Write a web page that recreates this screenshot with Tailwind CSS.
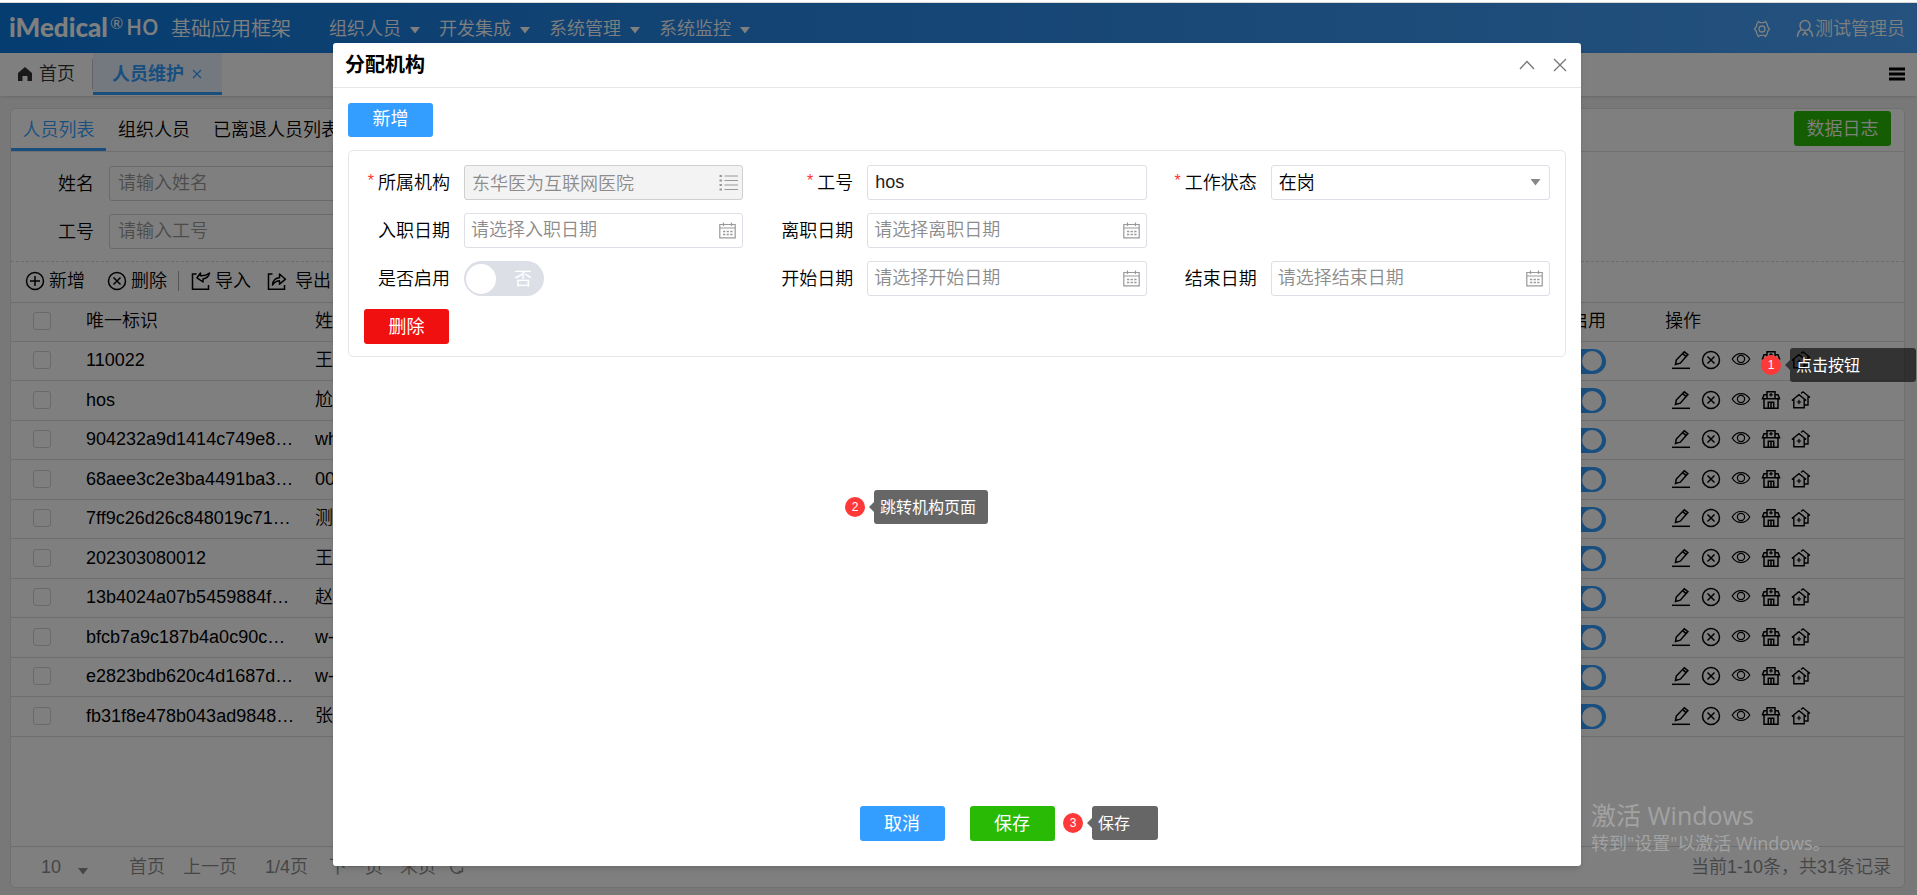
<!DOCTYPE html>
<html lang="zh-CN">
<head>
<meta charset="utf-8">
<title>人员维护</title>
<script src="https://cdn.jsdelivr.net/npm/@tailwindcss/browser@4"></script>
</head>
<body class="h-screen overflow-hidden flex flex-col bg-white text-black text-[18px] leading-6 font-[350] font-['Liberation_Sans','Noto_Sans_CJK_SC',sans-serif]">

<!-- icon sprite -->
<svg class="hidden" aria-hidden="true">
  <symbol id="i-gear" viewBox="0 0 18 18"><g fill="none" stroke="currentColor" stroke-width="1.3"><path d="M5.4 1.5 7 2.6h4l1.6-1.1 1.7 3 .3 2 1.9 2.5-1.9 2.5-.3 2-1.7 3L11 15.400H7l-1.600 1.100-1.700-3-.3-2L1.500 9l1.900-2.500.3-2z"/><circle cx="9" cy="9" r="3"/></g></symbol>
  <symbol id="i-user" viewBox="0 0 18 19"><g fill="none" stroke="currentColor" stroke-width="1.5"><circle cx="9" cy="6.500" r="5"/><path d="M5.500 10.500C3 12 1.500 14.500 1.500 18M12.500 10.500c2.500 1.500 4 4 4 7.500M6.500 16.500 9 13l2.500 3.500"/></g></symbol>
  <symbol id="i-home" viewBox="0 0 14 14"><path fill="currentColor" d="M7 0 0 6v8h4.500V9h5v5H14V6z"/></symbol>
  <symbol id="i-plus" viewBox="0 0 20 20"><g fill="none" stroke="currentColor" stroke-width="1.500"><circle cx="10" cy="10" r="8.500"/><path d="M10 5v10M5 10h10"/></g></symbol>
  <symbol id="i-xc" viewBox="0 0 20 20"><g fill="none" stroke="currentColor" stroke-width="1.500"><circle cx="10" cy="10" r="8.500"/><path d="m6.500 6.500 7 7M13.500 6.500l-7 7"/></g></symbol>
  <symbol id="i-import" viewBox="0 0 20 20"><g fill="none" stroke="currentColor" stroke-width="1.500"><path d="M5.500 3H1.500v15.200h16V14"/><path d="M18.500 2c-1 4-3 5.500-6.500 6v3L6 6.800 9.500 2v2.800C13 5 16 4 18.500 2z" stroke-linejoin="round"/></g></symbol>
  <symbol id="i-export" viewBox="0 0 20 20"><g fill="none" stroke="currentColor" stroke-width="1.500"><path d="M5.500 3H1.500v15.200h16V14"/><path d="M5.500 14c.5-5 3-7 7-7.200V3l6 5.200-6 5v-3.400c-3 0-5 1.200-7 4.200z" stroke-linejoin="round"/></g></symbol>
  <symbol id="i-edit" viewBox="0 0 20 20"><g fill="none" stroke="currentColor" stroke-width="1.500"><path d="M1 18.300h18"/><path d="m4.500 14.500.8-4.500 8-8.200 3.600 2.800-7.600 8.600z M11.600 3.600l3.600 3"/></g></symbol>
  <symbol id="i-eye" viewBox="0 0 20 20"><g fill="none" stroke="currentColor" stroke-width="1.200"><path d="M1.200 9C5.500 1.700 14.500 1.700 18.800 9 14.500 16.300 5.500 16.300 1.200 9z"/><circle cx="10" cy="9" r="3.600"/></g></symbol>
  <symbol id="i-hosp" viewBox="0 0 20 20"><g fill="none" stroke="currentColor" stroke-width="1.500"><path d="M6 8.500V1.800h8v6.700M6 4.700H3L1.500 8.800h17L17 4.700h-3M3 9v9.200h14V9M7.300 18v-5.700h5.400V18M10 12.500V18"/><path d="M10 3v3.600M8.200 4.800h3.600" stroke-width="1.300"/></g></symbol>
  <symbol id="i-house" viewBox="0 0 20 20"><g fill="none" stroke="currentColor" stroke-width="1.400"><path d="M.8 10.500 8 4.600l7.200 5.900M2.800 9.300v8.500h10.400V9.300M10 3.500l2-1.700L19 7.500M17 6.500V15h-3.500"/><path d="M8 9.800v4.400M5.800 12h4.400" stroke-width="1.200"/></g></symbol>
  <symbol id="i-cal" viewBox="0 0 17 17"><g fill="none" stroke="currentColor"><path d="M.8 2.500h15.400v13.300H.8zM.8 6h15.400M4.500.5v3.500M12.500.5v3.500" stroke-width="1.200"/><path d="M4 9.500h9.500M4 12.500h9.500" stroke-width="1.300" stroke-dasharray="2.300 1.300"/></g></symbol>
  <symbol id="i-list" viewBox="0 0 19 17"><path d="M5.500 2H19M5.500 6.500H19M5.500 11H19M5.500 15.500H19" stroke="currentColor" stroke-width="1.200"/><path d="M.5 2H3M.5 6.500H3M.5 11H3M.5 15.500H3" stroke="currentColor" stroke-width="2"/></symbol>
  <symbol id="i-down" viewBox="0 0 10 7"><path fill="currentColor" d="M0 0h10L5 6.500z"/></symbol>
  <symbol id="i-menu" viewBox="0 0 16 14"><path stroke="currentColor" stroke-width="3" d="M0 2h16M0 7h16M0 12h16"/></symbol>
  <symbol id="i-refresh" viewBox="0 0 16 16"><path fill="none" stroke="currentColor" stroke-width="1.400" d="M13 4A6.300 6.300 0 1 0 13 12M9.500 12.500h4v-4"/></symbol>
</svg>

<div class="h-[3px] shrink-0 border-b border-[#d8d8d8]"></div>

<div class="relative flex-1 min-h-0 flex flex-col bg-[#f1f1f1]">

  <!-- top bar -->
  <header class="h-[50px] shrink-0 flex items-center pl-[9px] pr-[12px] pt-[1px] text-white bg-gradient-to-r from-[#0a7ae0] via-[#2c8cea] to-[#4aa4fc]">
    <a href="#" class="w-[162px] flex items-center pb-1">
      <span class="font-['Lato'] font-black text-[26px] leading-7">iMedical</span><sup class="font-['Lato'] font-normal text-[16px] leading-4 ml-[2px] -top-1">®</sup><span class="font-['Open_Sans'] font-semibold text-[21px] leading-7 ml-[3px]">HO</span>
    </a>
    <span class="text-[20px] w-[158px]">基础应用框架</span>
    <nav class="flex gap-[19px]">
      <a href="#" class="flex items-center gap-[9px]">组织人员<svg class="w-[10px] h-[7px] mt-1"><use href="#i-down"/></svg></a>
      <a href="#" class="flex items-center gap-[9px]">开发集成<svg class="w-[10px] h-[7px] mt-1"><use href="#i-down"/></svg></a>
      <a href="#" class="flex items-center gap-[9px]">系统管理<svg class="w-[10px] h-[7px] mt-1"><use href="#i-down"/></svg></a>
      <a href="#" class="flex items-center gap-[9px]">系统监控<svg class="w-[10px] h-[7px] mt-1"><use href="#i-down"/></svg></a>
    </nav>
    <button class="ml-auto mr-[25px]" aria-label="设置"><svg class="w-[18px] h-[18px]"><use href="#i-gear"/></svg></button>
    <a href="#" class="flex items-center gap-[1px]"><svg class="w-[18px] h-[19px]"><use href="#i-user"/></svg>测试管理员</a>
  </header>

  <!-- page tabs -->
  <div class="h-[43px] shrink-0 flex items-stretch bg-white shadow pr-[12px] pb-px">
    <a href="#" class="flex items-center gap-[7px] pl-[18px] w-[92px] text-[#333]"><svg class="w-[14px] h-[14px]"><use href="#i-home"/></svg>首页</a>
    <div class="w-px my-[6px] bg-[#c8c8c8]"></div>
    <div class="w-[129px] flex items-center bg-[#e6f3ff] border-b-[3px] border-[#339eff] pt-[2px] pl-[19px] text-[#339eff]">
      <a href="#" class="font-bold">人员维护</a>
      <button class="ml-2" aria-label="关闭标签"><svg class="w-[10px] h-[10px]" viewBox="0 0 10 10"><path stroke="currentColor" stroke-width="1.200" d="m1 1 8 8M9 1 1 9"/></svg></button>
    </div>
    <button class="ml-auto" aria-label="菜单"><svg class="w-4 h-[14px]"><use href="#i-menu"/></svg></button>
  </div>

  <!-- main card -->
  <main class="flex-1 min-h-0 mt-3 mx-3 mb-[7px] ml-[10px] flex flex-col bg-white border border-[#e0e0e0] rounded-[5px]">
    <div class="h-[43px] shrink-0 flex items-stretch border-b border-[#e0e0e0] pr-[13px]">
      <a href="#" class="w-[95px] flex items-center justify-center border-b-[3px] border-[#339eff] text-[#339eff] pt-[2px]">人员列表</a>
      <a href="#" class="flex items-center ml-[12px]">组织人员</a>
      <a href="#" class="flex items-center ml-[23px]">已离退人员列表</a>
      <button class="ml-auto mt-[2px] h-[35px] w-[97px] rounded-[3px] bg-[#28ba05] text-white">数据日志</button>
    </div>
    <form class="shrink-0 flex flex-col gap-[13px] pt-[14px] pb-[12px] border-b border-dashed border-[#d8d8d8]">
      <div class="flex items-center gap-[15px]"><label for="q1" class="w-[83px] text-right">姓名</label><input id="q1" placeholder="请输入姓名" class="w-[280px] h-[35px] border border-[#d4d4d4] rounded-[3px] px-2 placeholder:text-[#999]"></div>
      <div class="flex items-center gap-[15px]"><label for="q2" class="w-[83px] text-right">工号</label><input id="q2" placeholder="请输入工号" class="w-[280px] h-[35px] border border-[#d4d4d4] rounded-[3px] px-2 placeholder:text-[#999]"></div>
    </form>
    <div class="h-[40px] shrink-0 flex items-center pl-[14px] pb-[3px]">
      <button class="flex items-center gap-1"><svg class="w-5 h-5"><use href="#i-plus"/></svg>新增</button>
      <button class="flex items-center gap-1 ml-[22px]"><svg class="w-5 h-5"><use href="#i-xc"/></svg>删除</button>
      <span class="w-px h-5 bg-[#aaa] ml-[11px]"></span>
      <button class="flex items-center gap-1 ml-[12px]"><svg class="w-5 h-5"><use href="#i-import"/></svg>导入</button>
      <button class="flex items-center gap-2 ml-[16px]"><svg class="w-5 h-5"><use href="#i-export"/></svg>导出</button>
    </div>
    <div class="flex-1 min-h-0">
      <table class="w-full table-fixed border-collapse">
        <thead>
          <tr class="h-[39px] border-y border-[#dcdcdc] bg-[#fcfcfc] text-left">
            <th class="w-[63px] pl-[22px] pb-[2px]"><input type="checkbox" aria-label="全选" class="block appearance-none size-[18px] border border-[#d4d4d8] rounded-[3px] bg-white"></th>
            <th class="w-[230px] pl-3 pb-[2px] font-[350]">唯一标识</th>
            <th class="pl-[11px] pb-[2px] font-[350]">姓名</th>
            <th class="w-[130px] pl-[12px] pb-[2px] font-[350]">是否启用</th>
            <th class="w-[252px] pl-[13px] pb-[2px] font-[350]">操作</th>
          </tr>
        </thead>
        <tbody id="rows"></tbody>
      </table>
    </div>
    <footer class="h-[41px] shrink-0 flex items-center border-t border-[#dcdcdc] pl-[30px] pr-[13px] text-[#8c8c8c]">
      <label class="relative flex items-center mr-[41px]"><select aria-label="每页条数" class="appearance-none w-[47px]"><option>10</option></select><svg class="absolute right-0 top-[13px] w-[10px] h-[7px] pointer-events-none"><use href="#i-down"/></svg></label>
      <a href="#" class="mr-[18px]">首页</a><a href="#" class="mr-[28px]">上一页</a><span class="mr-[21px]">1/4页</span><a href="#" class="mr-[17px]">下一页</a><a href="#" class="mr-[13px]">末页</a>
      <button aria-label="刷新"><svg class="w-4 h-4"><use href="#i-refresh"/></svg></button>
      <span class="ml-auto">当前1-10条，共31条记录</span>
    </footer>
  </main>

  <!-- dialog layer -->
  <div class="absolute inset-0 bg-black/50 flex pt-[40px] pb-[29px] pl-[333px] pr-[336px]">
    <section role="dialog" aria-label="分配机构" class="flex-1 flex flex-col bg-white rounded-[3px] shadow-md">
      <div class="h-[45px] shrink-0 flex items-center border-b border-[#e6e6e6] pl-[12px] pr-[14px] text-[#777]">
        <h2 class="text-[20px] font-bold text-black">分配机构</h2>
        <button class="ml-auto" aria-label="收起"><svg class="w-4 h-4" viewBox="0 0 16 16"><path fill="none" stroke="currentColor" stroke-width="1.300" d="m1 12 7-7.500L15 12"/></svg></button>
        <button class="ml-[18px]" aria-label="关闭"><svg class="w-[14px] h-[14px]" viewBox="0 0 14 14"><path stroke="currentColor" stroke-width="1.300" d="m1 1 12 12M13 1 1 13"/></svg></button>
      </div>
      <div class="flex-1 flex flex-col px-[15px] pt-[15px] pb-[25px]">
        <button class="w-[85px] h-[34px] shrink-0 rounded-[3px] bg-[#339eff] text-white font-normal pb-[2px]">新增</button>
        <form class="mt-[13px] border border-[#e6e6e6] rounded-[5px] px-[15px] pt-[14px] pb-[12px]">
          <div class="grid grid-cols-3 gap-x-6 gap-y-[13px]">
            <div class="flex items-center gap-[14px]"><label for="f1" class="w-[86px] text-right whitespace-nowrap flex justify-end"><span class="text-[#ff3333] text-[16px] leading-5 mr-1">*</span>所属机构</label><span class="relative flex-1"><input id="f1" disabled value="东华医为互联网医院" class="block w-full h-[35px] border border-[#d0d0d0] rounded-[3px] bg-[#f3f3f3] px-[7px] pb-[2px] text-[#8c8c8c]"><svg class="absolute right-[5px] top-[9px] w-[19px] h-[17px] text-[#999]"><use href="#i-list"/></svg></span></div>
            <div class="flex items-center gap-[14px]"><label for="f2" class="w-[86px] text-right whitespace-nowrap flex justify-end"><span class="text-[#ff3333] text-[16px] leading-5 mr-1">*</span>工号</label><input id="f2" value="hos" class="flex-1 min-w-0 h-[35px] border border-[#dcdfe6] rounded-[3px] px-[7px] text-[#222]"></div>
            <div class="flex items-center gap-[14px]"><label for="f3" class="w-[86px] text-right whitespace-nowrap flex justify-end"><span class="text-[#ff3333] text-[16px] leading-5 mr-1">*</span>工作状态</label><span class="relative flex-1"><select id="f3" class="block appearance-none w-full h-[35px] border border-[#dcdfe6] rounded-[3px] px-[7px]"><option>在岗</option></select><svg class="absolute right-[9px] top-[14px] w-[11px] h-[7px] text-[#888] pointer-events-none"><use href="#i-down"/></svg></span></div>

            <div class="flex items-center gap-[14px]"><label for="f4" class="w-[86px] text-right">入职日期</label><span class="relative flex-1"><input id="f4" placeholder="请选择入职日期" class="block w-full h-[35px] border border-[#dcdfe6] rounded-[3px] px-[6px] placeholder:text-[#8c8c8c]"><svg class="absolute right-[7px] top-[9px] w-[17px] h-[17px] text-[#999]"><use href="#i-cal"/></svg></span></div>
            <div class="flex items-center gap-[14px]"><label for="f5" class="w-[86px] text-right">离职日期</label><span class="relative flex-1"><input id="f5" placeholder="请选择离职日期" class="block w-full h-[35px] border border-[#dcdfe6] rounded-[3px] px-[6px] placeholder:text-[#8c8c8c]"><svg class="absolute right-[7px] top-[9px] w-[17px] h-[17px] text-[#999]"><use href="#i-cal"/></svg></span></div>
            <div></div>

            <div class="flex items-center gap-[14px]"><label for="f6" class="w-[86px] text-right">是否启用</label><span class="relative flex items-center w-[80px] h-[35px] rounded-full bg-[#dcdfe6]"><input id="f6" type="checkbox" role="switch" class="appearance-none absolute inset-0 rounded-full"><i class="size-[30px] ml-[2px] rounded-full bg-white"></i><span class="ml-[18px] text-white font-normal">否</span></span></div>
            <div class="flex items-center gap-[14px]"><label for="f7" class="w-[86px] text-right">开始日期</label><span class="relative flex-1"><input id="f7" placeholder="请选择开始日期" class="block w-full h-[35px] border border-[#dcdfe6] rounded-[3px] px-[6px] placeholder:text-[#8c8c8c]"><svg class="absolute right-[7px] top-[9px] w-[17px] h-[17px] text-[#999]"><use href="#i-cal"/></svg></span></div>
            <div class="flex items-center gap-[14px]"><label for="f8" class="w-[86px] text-right">结束日期</label><span class="relative flex-1"><input id="f8" placeholder="请选择结束日期" class="block w-full h-[35px] border border-[#dcdfe6] rounded-[3px] px-[6px] placeholder:text-[#8c8c8c]"><svg class="absolute right-[7px] top-[9px] w-[17px] h-[17px] text-[#999]"><use href="#i-cal"/></svg></span></div>
          </div>
          <button type="button" class="block mt-[13px] w-[85px] h-[35px] rounded-[3px] bg-[#f01010] text-white font-normal">删除</button>
        </form>
        <div class="mt-auto flex justify-center gap-[25px]">
          <button class="w-[85px] h-[35px] rounded-[3px] bg-[#339eff] text-white font-normal">取消</button>
          <button class="w-[85px] h-[35px] rounded-[3px] bg-[#28ba05] text-white font-normal">保存</button>
        </div>
      </div>
    </section>
  </div>

  <!-- system watermark -->
  <div class="absolute right-[93px] bottom-[40px] w-[233px] text-[#a2a2a2] whitespace-nowrap pointer-events-none font-normal font-['Open_Sans','Noto_Sans_CJK_SC',sans-serif]">
    <p class="text-[25px] leading-8">激活 Windows</p>
    <p class="text-[18px] leading-6">转到"设置"以激活 Windows。</p>
  </div>

  <!-- step callouts -->
  <div class="absolute right-px top-[345px] flex items-center text-white text-[16px] font-normal">
    <span class="size-5 rounded-full bg-[#ff3838] text-[12px] leading-5 text-center">1</span>
    <i class="ml-[4px] border-y-[5px] border-r-[5px] border-y-transparent border-r-black/60"></i>
    <span class="w-[126px] h-[34px] pl-[6px] leading-[36px] rounded-[3px] bg-black/60">点击按钮</span>
  </div>
  <div class="absolute left-[845px] top-[487px] flex items-center text-white text-[16px] font-normal">
    <span class="size-5 rounded-full bg-[#ff3838] text-[12px] leading-5 text-center">2</span>
    <i class="ml-[4px] border-y-[5px] border-r-[5px] border-y-transparent border-r-black/60"></i>
    <span class="w-[114px] h-[34px] pl-[6px] leading-[36px] rounded-[3px] bg-black/60">跳转机构页面</span>
  </div>
  <div class="absolute left-[1063px] top-[803px] flex items-center text-white text-[16px] font-normal">
    <span class="size-5 rounded-full bg-[#ff3838] text-[12px] leading-5 text-center">3</span>
    <i class="ml-[4px] border-y-[5px] border-r-[5px] border-y-transparent border-r-black/60"></i>
    <span class="w-[66px] h-[34px] pl-[6px] leading-[36px] rounded-[3px] bg-black/60">保存</span>
  </div>
</div>

<script>
const people = [
  ['110022', '王'], ['hos', '尬'], ['904232a9d1414c749e8…', 'wh'], ['68aee3c2e3ba4491ba3…', '00'],
  ['7ff9c26d26c848019c71…', '测'], ['202303080012', '王'], ['13b4024a07b5459884f…', '赵'],
  ['bfcb7a9c187b4a0c90c…', 'w-'], ['e2823bdb620c4d1687d…', 'w-'], ['fb31f8e478b043ad9848…', '张']
];
const actions = [['edit', '编辑'], ['xc', '停用'], ['eye', '查看'], ['hosp', '分配机构'], ['house', '分配科室']];
document.getElementById('rows').innerHTML = people.map(([id, name]) => `
  <tr class="odd:h-[39px] even:h-[40px] border-b border-[#dcdcdc]">
    <td class="pl-[22px] pb-[2px]"><input type="checkbox" aria-label="选择 ${id}" class="block appearance-none size-[18px] border border-[#d4d4d8] rounded-[3px]"></td>
    <td class="pl-3 pb-[2px] whitespace-nowrap">${id}</td>
    <td class="pl-[11px] pb-[2px]">${name}</td>
    <td class="pl-[4px]"><span class="relative flex items-center justify-end w-[80px] h-[25px] pr-[4px] rounded-full bg-[#339eff]"><input type="checkbox" role="switch" checked aria-label="启用 ${id}" class="appearance-none absolute inset-0 rounded-full"><i class="size-5 rounded-full bg-white"></i></span></td>
    <td class="pl-[19px] pb-[2px]"><div class="flex gap-[10px]">${actions.map(([icon, label]) => `<button aria-label="${label}"><svg class="w-5 h-5 block"><use href="#i-${icon}"/></svg></button>`).join('')}</div></td>
  </tr>`).join('');
</script>
</body>
</html>
